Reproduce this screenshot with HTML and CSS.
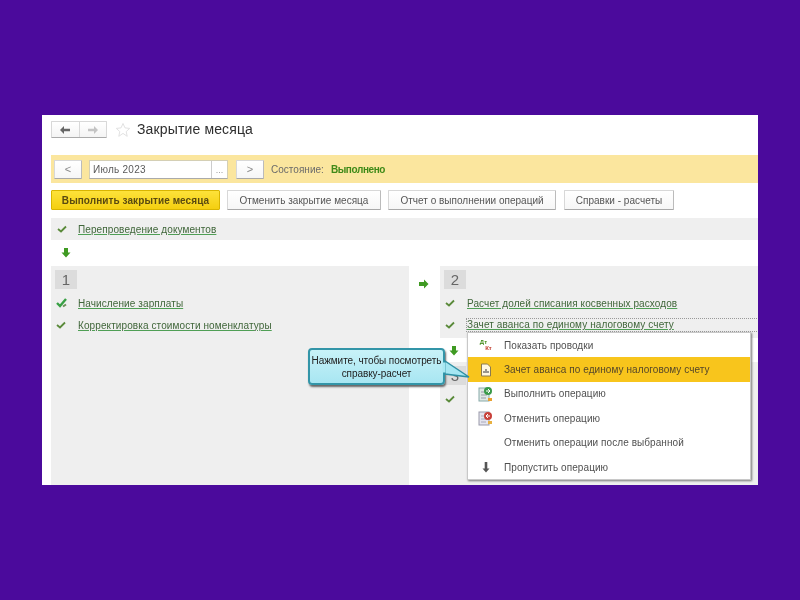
FILE: index.html
```html
<!DOCTYPE html>
<html lang="ru">
<head>
<meta charset="utf-8">
<title>Закрытие месяца</title>
<link rel="stylesheet" href="styles.css">
</head>
<body>
<main class="window">
  <header class="head">
    <div class="nav">
      <span class="nav-btn"><svg width="12" height="10" viewBox="0 0 12 10"><path d="M1 5l4-4v2.700h6v2.600H5V9z" fill="#666"/></svg></span>
      <span class="nav-btn"><svg width="12" height="10" viewBox="0 0 12 10"><path d="M11 5L7 1v2.700H1v2.600h6V9z" fill="#c4c4c4"/></svg></span>
    </div>
    <svg class="star" width="16" height="16" viewBox="0 0 16 16"><path d="M8 1.500l2 4.400 4.700.5-3.500 3.200 1 4.700L8 11.400l-4.200 2.900 1-4.700L1.300 6.400 6 5.900z" fill="#fff" stroke="#e2e2e2"/></svg>
    <h1 class="title">Закрытие месяца</h1>
  </header>

  <section class="period">
    <span class="btn small">&lt;</span>
    <span class="field"><span class="field-text">Июль 2023</span><span class="field-more">...</span></span>
    <span class="btn small next">&gt;</span>
    <span class="state-label">Состояние:</span>
    <b class="state-value">Выполнено</b>
  </section>

  <section class="actions">
    <span class="btn primary">Выполнить закрытие месяца</span>
    <span class="btn w1">Отменить закрытие месяца</span>
    <span class="btn w2">Отчет о выполнении операций</span>
    <span class="btn w3">Справки - расчеты</span>
  </section>

  <section class="first-row">
    <svg class="check" width="10" height="8" viewBox="0 0 10 8"><path d="M1 4l3 2.500L9 1.500" fill="none" stroke="#5a8a3a" stroke-width="1.800"/></svg>
    <a class="link">Перепроведение документов</a>
  </section>

  <div class="down-row">
    <svg width="10" height="11" viewBox="0 0 10 11"><path d="M3 1h4v4.500h2.500L5 10.500.5 5.500H3z" fill="#3f9a22"/></svg>
  </div>

  <div class="columns">
    <section class="col left">
      <div class="badge">1</div>
      <div class="row">
        <svg class="check big" width="12" height="10" viewBox="0 0 12 10"><path d="M1 5l3 3 6-7" fill="none" stroke="#38a044" stroke-width="2.400"/><path d="M7 8.500l3-2" stroke="#6d8f5a" stroke-width="2"/></svg>
        <a class="link">Начисление зарплаты</a>
      </div>
      <div class="row">
        <svg class="check" width="10" height="8" viewBox="0 0 10 8"><path d="M1 4l3 2.500L9 1.500" fill="none" stroke="#5a8a3a" stroke-width="1.800"/></svg>
        <a class="link">Корректировка стоимости номенклатуры</a>
      </div>
    </section>

    <div class="between">
      <svg width="11" height="10" viewBox="0 0 11 10"><path d="M1 3h5V.5L10.500 5 6 9.500V7H1z" fill="#3f9a22"/></svg>
    </div>

    <section class="right">
      <div class="block two">
        <div class="badge">2</div>
        <div class="row">
          <svg class="check" width="10" height="8" viewBox="0 0 10 8"><path d="M1 4l3 2.500L9 1.500" fill="none" stroke="#5a8a3a" stroke-width="1.800"/></svg>
          <a class="link">Расчет долей списания косвенных расходов</a>
        </div>
        <div class="row">
          <svg class="check" width="10" height="8" viewBox="0 0 10 8"><path d="M1 4l3 2.500L9 1.500" fill="none" stroke="#5a8a3a" stroke-width="1.800"/></svg>
          <a class="link focused">Зачет аванса по единому налоговому счету</a>
        </div>
      </div>
      <div class="down-row inner">
        <svg width="10" height="11" viewBox="0 0 10 11"><path d="M3 1h4v4.500h2.500L5 10.500.5 5.500H3z" fill="#3f9a22"/></svg>
      </div>
      <div class="block three">
        <div class="badge">3</div>
        <div class="row">
          <svg class="check" width="10" height="8" viewBox="0 0 10 8"><path d="M1 4l3 2.500L9 1.500" fill="none" stroke="#5a8a3a" stroke-width="1.800"/></svg>
        </div>
      </div>
    </section>
  </div>

  <nav class="menu">
    <div class="item">
      <span class="ico dtkt"><i>Дт</i><i class="kt">Кт</i></span>
      <span>Показать проводки</span>
    </div>
    <div class="item active">
      <span class="ico"><svg width="12" height="14" viewBox="0 0 12 14"><path d="M1.500 1h6l3 3v9h-9z" fill="#fff8e0" stroke="#8a7a50"/><path d="M4 10V8m2 2V6m2 4V8" stroke="#555" stroke-width="1.200"/></svg></span>
      <span>Зачет аванса по единому налоговому счету</span>
    </div>
    <div class="item">
      <span class="ico"><svg width="16" height="16" viewBox="0 0 16 16"><rect x="1" y="2" width="10" height="13" fill="#dfe8e4" stroke="#8aa"/><path d="M3 6h6M3 9h6M3 12h5" stroke="#99a"/><circle cx="10" cy="5" r="4" fill="#3a9a4a"/><path d="M8 5h4M10 3l2 2-2 2" stroke="#fff" fill="none"/><rect x="10" y="12" width="4" height="3" fill="#e8a030"/></svg></span>
      <span>Выполнить операцию</span>
    </div>
    <div class="item">
      <span class="ico"><svg width="16" height="16" viewBox="0 0 16 16"><rect x="1" y="2" width="10" height="13" fill="#e4e4ee" stroke="#99a"/><path d="M3 6h6M3 9h6M3 12h5" stroke="#aab"/><circle cx="10" cy="6" r="4" fill="#c8403a"/><path d="M12 6H8M10 4L8 6l2 2" stroke="#fff" fill="none"/><rect x="10" y="11" width="4" height="3" fill="#e8b040"/></svg></span>
      <span>Отменить операцию</span>
    </div>
    <div class="item"><span class="ico"></span><span>Отменить операции после выбранной</span></div>
    <div class="item">
      <span class="ico"><svg width="8" height="12" viewBox="0 0 8 12"><path d="M2.700 1h2.600v6.500H7.500L4 11.500.5 7.500h2.200z" fill="#555"/></svg></span>
      <span>Пропустить операцию</span>
    </div>
  </nav>

  <aside class="callout">
    <p class="callout-text">Нажмите, чтобы посмотреть<br>справку-расчет</p>
    <svg class="tail" width="26" height="24" viewBox="0 0 26 24"><path d="M0 1l24 16L0 14z" fill="#a5e6f2" stroke="#2e8fa3" stroke-width="1.500"/><path d="M-1 2.500v10" stroke="#a8e8f3" stroke-width="3"/></svg>
  </aside>
</main>
</body>
</html>
```

FILE: styles.css
```css
* { box-sizing: border-box; }
html, body { height: 100%; }
body {
  margin: 0;
  background: #4b0a9c;
  display: flex;
  align-items: flex-start;
  justify-content: center;
  padding-top: 115px;
  font-family: "Liberation Sans", Arial, sans-serif;
  color: #4d4d4d;
}
.window {
  position: relative;
  width: 716px;
  height: 370px;
  background: #fff;
  padding-left: 9px;
  overflow: hidden;
  font-size: 10px;
  filter: blur(.3px);
}
.head {
  height: 40px;
  display: flex;
  align-items: flex-start;
  padding-top: 6px;
}
.nav { display: flex; height: 17px; width: 56px; border: 1px solid #d8d8d8; border-bottom-color: #aaa; border-radius: 1px; background: linear-gradient(#fff, #f4f4f4); }
.nav-btn { flex: 1; display: flex; align-items: center; justify-content: center; }
.nav-btn + .nav-btn { border-left: 1px solid #d8d8d8; }
.star { margin: 1px 0 0 8px; }
.title { margin: 0 0 0 6px; font-size: 14px; line-height: 16px; font-weight: 400; letter-spacing: .14px; color: #2e2e2e; }

.period {
  height: 28px;
  background: #fbe69e;
  display: flex;
  align-items: center;
  padding-left: 3px;
}
.btn {
  display: flex;
  align-items: center;
  justify-content: center;
  height: 20px;
  background: linear-gradient(#fff, #f6f6f6);
  border: 1px solid #d8d8d8;
  border-bottom-color: #a8a8a8;
  border-right-color: #bbb;
  border-radius: 1px;
  color: #555;
  font-size: 10px;
  letter-spacing: .02px;
  white-space: nowrap;
}
.small { width: 28px; height: 19px; font-size: 11px; color: #888; }
.next { margin-left: 8px; }
.field { display: flex; width: 139px; height: 19px; margin-left: 7px; background: #fff; border: 1px solid #d4cfb5; border-bottom-color: #aaa; }
.field-text { flex: 1; line-height: 17px; padding-left: 3px; font-size: 10px; letter-spacing: .25px; color: #5a5a5a; }
.field-more { width: 16px; border-left: 1px solid #ccc; text-align: center; color: #999; font-size: 9px; line-height: 19px; }
.state-label { margin-left: 7px; color: #6a6a6a; letter-spacing: .02px; }
.state-value { margin-left: 7px; color: #3f8a18; letter-spacing: -.4px; }

.actions { display: flex; gap: 7px; height: 35px; padding-top: 7px; }
.primary {
  width: 169px;
  background: linear-gradient(#fde23a, #f4cf10);
  border-color: #d9b500;
  font-weight: 700;
  color: #5a4a10;
  letter-spacing: .07px;
}
.w1 { width: 154px; }
.w2 { width: 168px; }
.w3 { width: 110px; margin-left: 1px; }

.first-row { height: 22px; background: #efefef; display: flex; align-items: center; padding-left: 6px; }
.first-row .check { margin-right: 11px; }
.link {
  color: #40663a;
  text-decoration: underline;
  text-decoration-color: #4f9f55;
  font-size: 10px;
  letter-spacing: .1px;
  white-space: nowrap;
}
.down-row { height: 26px; display: flex; align-items: center; padding: 0 0 2px 10px; }

.columns { display: flex; height: 219px; }
.col.left { width: 358px; background: #efefef; padding: 4px 0 0 4px; }
.between { width: 31px; padding: 13px 0 0 9px; }
.right { width: 318px; display: flex; flex-direction: column; }
.block { background: #efefef; padding: 4px 0 0 4px; }
.two { height: 72px; }
.inner { height: 24px; padding: 0 0 0 9px; }
.three { flex: 1; }
.badge {
  width: 22px;
  height: 19px;
  background: #dcdcdc;
  color: #666;
  font-size: 15px;
  line-height: 19px;
  text-align: center;
}
.row { height: 22px; display: flex; align-items: center; padding-left: 1px; }
.badge + .row { margin-top: 3px; }
.row .check { flex: none; margin-right: 12px; }
.row .check.big { margin-right: 10px; }
.focused {
  flex: 1;
  align-self: center;
  line-height: 12px;
  margin-right: -2px;
  outline: 1px dotted #999;
}

.menu {
  position: absolute;
  left: 425px;
  top: 217px;
  width: 284px;
  height: 148px;
  background: #fff;
  border: 1px solid #c8c8c8;
  box-shadow: 1px 1px 2px #777;
}
.item {
  height: 24.400px;
  display: flex;
  align-items: center;
  font-size: 10px;
  letter-spacing: .07px;
  color: #505050;
}
.item.active { background: #f8c51c; color: #55472a; }
.ico { width: 36px; display: flex; justify-content: center; align-items: center; flex: none; padding-right: 1px; }
.dtkt { flex-direction: column; font-size: 6px; line-height: 6px; font-weight: 700; color: #3f8a18; }
.dtkt i { font-style: normal; margin-right: 4px; }
.dtkt .kt { color: #c0392b; margin: 0 0 0 6px; }

.callout {
  position: absolute;
  left: 266px;
  top: 233px;
  width: 137px;
  height: 37px;
  background: linear-gradient(#c8f2f8, #a8e6f2);
  border: 2px solid #3395a8;
  border-radius: 4px;
  box-shadow: 1px 2px 2px #666;
}
.callout-text {
  margin: 0;
  text-align: center;
  font-size: 10px;
  line-height: 13px;
  padding-top: 4px;
  letter-spacing: -.08px;
  color: #222;
}
.tail { position: absolute; left: 135px; top: 10px; overflow: visible; }
```
